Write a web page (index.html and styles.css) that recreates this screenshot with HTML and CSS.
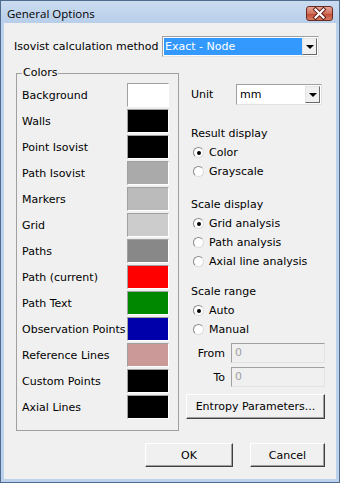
FILE: index.html
```html
<!DOCTYPE html>
<html lang="en">
<head>
    <meta charset="UTF-8">
    <title>General Options</title>
    <link rel="stylesheet" href="styles.css">
</head>
<body>
    <div class="window">
        <div class="titlebar">
            <span class="title">General Options</span>
            <span class="close">
                <svg width="27" height="15" viewBox="0 0 27 15">
                    <path d="M9.5 3.5 L17.5 11.5 M17.5 3.5 L9.5 11.5" stroke="#5a1a12" stroke-width="4" stroke-linecap="square"/>
                    <path d="M9.5 3.5 L17.5 11.5 M17.5 3.5 L9.5 11.5" stroke="#fff" stroke-width="2.2" stroke-linecap="square"/>
                </svg>
            </span>
        </div>
        <div class="client">
            <div class="method-row">
                <span class="method-label">Isovist calculation method</span>
                <div class="combo combo-method">
                    <span class="combo-value selected">Exact - Node</span>
                    <span class="combo-arrow"><span class="tri"></span></span>
                </div>
            </div>

            <div class="main">
                <fieldset class="colors">
                    <legend>Colors</legend>
                    <div class="color-row"><span>Background</span><span class="swatch sw-white"></span></div>
                    <div class="color-row"><span>Walls</span><span class="swatch sw-black"></span></div>
                    <div class="color-row"><span>Point Isovist</span><span class="swatch sw-black"></span></div>
                    <div class="color-row"><span>Path Isovist</span><span class="swatch sw-gray1"></span></div>
                    <div class="color-row"><span>Markers</span><span class="swatch sw-gray2"></span></div>
                    <div class="color-row"><span>Grid</span><span class="swatch sw-gray3"></span></div>
                    <div class="color-row"><span>Paths</span><span class="swatch sw-gray4"></span></div>
                    <div class="color-row"><span>Path (current)</span><span class="swatch sw-red"></span></div>
                    <div class="color-row"><span>Path Text</span><span class="swatch sw-green"></span></div>
                    <div class="color-row"><span>Observation Points</span><span class="swatch sw-blue"></span></div>
                    <div class="color-row"><span>Reference Lines</span><span class="swatch sw-pink"></span></div>
                    <div class="color-row"><span>Custom Points</span><span class="swatch sw-black"></span></div>
                    <div class="color-row"><span>Axial Lines</span><span class="swatch sw-black"></span></div>
                </fieldset>

                <div class="options">
                    <div class="unit-row">
                        <span class="unit-label">Unit</span>
                        <div class="combo combo-unit">
                            <span class="combo-value">mm</span>
                            <span class="combo-arrow"><span class="tri"></span></span>
                        </div>
                    </div>

                    <div class="group first">
                        <div class="line">Result display</div>
                        <div class="radio checked"><span class="dot"></span>Color</div>
                        <div class="radio"><span class="dot"></span>Grayscale</div>
                    </div>

                    <div class="group gap-14">
                        <div class="line">Scale display</div>
                        <div class="radio checked"><span class="dot"></span>Grid analysis</div>
                        <div class="radio"><span class="dot"></span>Path analysis</div>
                        <div class="radio"><span class="dot"></span>Axial line analysis</div>
                    </div>

                    <div class="group gap-11">
                        <div class="line">Scale range</div>
                        <div class="radio checked"><span class="dot"></span>Auto</div>
                        <div class="radio"><span class="dot"></span>Manual</div>
                    </div>

                    <div class="range-row from">
                        <span class="range-label">From</span>
                        <span class="field disabled">0</span>
                    </div>
                    <div class="range-row to">
                        <span class="range-label">To</span>
                        <span class="field disabled">0</span>
                    </div>

                    <button class="btn entropy">Entropy Parameters...</button>
                </div>
            </div>

            <div class="footer">
                <button class="btn ok">OK</button>
                <button class="btn cancel">Cancel</button>
            </div>
        </div>
    </div>
</body>
</html>
```

FILE: styles.css
```css
html, body {
    margin: 0;
    padding: 0;
}
body {
    width: 340px;
    height: 483px;
    font-family: "DejaVu Sans", Tahoma, sans-serif;
    font-size: 11px;
    color: #000;
}
.window {
    width: 340px;
    height: 483px;
    box-sizing: border-box;
    border: 1px solid #4f6c8e;
    background: #bcd2ec;
    padding: 0 3px 3px;
    display: flex;
    flex-direction: column;
}
.titlebar {
    height: 22px;
    margin: 0 -3px;
    padding: 0 6px;
    background: linear-gradient(to bottom, #cadcf0, #b8cee9);
    display: flex;
    align-items: center;
    justify-content: space-between;
}
.title {
    font-family: "Open Sans", "DejaVu Sans", sans-serif;
    font-size: 11.5px;
    color: #000;
    padding-top: 2px;
}
.close {
    width: 27px;
    height: 15px;
    margin-top: 3px;
    box-sizing: border-box;
    border: 1px solid #6b2a20;
    border-radius: 3px;
    background: linear-gradient(to bottom, #e7a597, #d0705c 50%, #c04a33 51%, #d47b62);
    display: flex;
    overflow: hidden;
}
.close svg {
    margin: -1px;
}
.client {
    flex: 1;
    background: #f0f0f0;
    display: flex;
    flex-direction: column;
}

/* top row */
.method-row {
    display: flex;
    align-items: center;
    margin-top: 13px;
    padding-left: 10px;
}
.method-label {
    width: 148px;
}
.combo {
    box-sizing: border-box;
    height: 21px;
    border: 1px solid;
    border-color: #a0a0a0 #e3e3e3 #e3e3e3 #a0a0a0;
    background: #fff;
    padding: 1px;
    display: flex;
}
.combo-method {
    width: 157px;
}
.combo-value {
    flex: 1;
    line-height: 17px;
    padding-left: 2px;
}
.combo-value.selected {
    background: #3399ff;
    color: #fff;
    padding-left: 1px;
}
.combo-arrow {
    width: 15px;
    box-sizing: border-box;
    background: #f0f0f0;
    border: 1px solid;
    border-color: #e3e3e3 #696969 #696969 #e3e3e3;
    display: flex;
    align-items: center;
    justify-content: center;
}
.tri {
    width: 0;
    height: 0;
    border-left: 4px solid transparent;
    border-right: 4px solid transparent;
    border-top: 4px solid #000;
}

/* main area */
.main {
    display: flex;
    align-items: flex-start;
    margin-top: 9px;
    padding-left: 12px;
    gap: 7px;
}
.colors {
    margin: 0;
    width: 163px;
    box-sizing: border-box;
    border: 1px solid #a0a0a0;
    padding: 3px 9px 11px 5px;
    display: flex;
    flex-direction: column;
    gap: 2px;
    min-inline-size: 0;
}
.colors legend {
    padding: 0 1px;
    line-height: 14px;
}
.color-row {
    display: flex;
    align-items: center;
    justify-content: space-between;
    height: 24px;
}
.swatch {
    width: 42px;
    height: 24px;
    box-sizing: border-box;
    border: 1px solid;
    border-color: #a0a0a0 #fff #fff #a0a0a0;
}
.sw-white { background: #fff; }
.sw-black { background: #000; }
.sw-gray1 { background: #aaaaaa; }
.sw-gray2 { background: #bbbbbb; }
.sw-gray3 { background: #cccccc; }
.sw-gray4 { background: #888888; }
.sw-red { background: #ff0000; }
.sw-green { background: #008800; }
.sw-blue { background: #0000aa; }
.sw-pink { background: #cc9999; }

/* right options */
.options {
    width: 139px;
    margin-top: 18px;
    display: flex;
    flex-direction: column;
}
.unit-row {
    display: flex;
    align-items: center;
}
.unit-label {
    width: 45px;
    padding-left: 5px;
}
.combo-unit {
    width: 86px;
}
.group.first {
    margin-top: 19px;
}
.group.gap-14 {
    margin-top: 14px;
}
.group.gap-11 {
    margin-top: 11px;
}
.line {
    height: 19px;
    line-height: 19px;
    padding-left: 5px;
}
.radio {
    height: 19px;
    display: flex;
    align-items: center;
    padding-left: 7px;
    gap: 5px;
}
.dot {
    width: 11px;
    height: 11px;
    box-sizing: border-box;
    border-radius: 50%;
    border: 1px solid;
    border-color: #8a8a8a #dcdcdc #dcdcdc #8a8a8a;
    background: #fff;
    display: flex;
    align-items: center;
    justify-content: center;
}
.radio.checked .dot::after {
    content: "";
    width: 4px;
    height: 4px;
    border-radius: 50%;
    background: #000;
}
.range-row {
    display: flex;
    align-items: center;
    height: 20px;
    margin-top: 4px;
}
.range-label {
    width: 39px;
    text-align: right;
    padding-right: 6px;
}
.field {
    width: 94px;
    height: 20px;
    box-sizing: border-box;
    border: 1px solid;
    border-color: #a0a0a0 #e3e3e3 #e3e3e3 #a0a0a0;
    padding-left: 3px;
    line-height: 18px;
}
.field.disabled {
    background: #f0f0f0;
    color: #a0a0a0;
}

.btn {
    font-family: "DejaVu Sans", Tahoma, sans-serif;
    font-size: 11px;
    color: #000;
    background: #f0f0f0;
    box-sizing: border-box;
    border: 1px solid;
    border-color: #fff #404040 #404040 #fff;
    box-shadow: inset -1px -1px 0 #a0a0a0;
    padding: 0;
    border-radius: 0;
}
.entropy {
    width: 139px;
    height: 25px;
    margin-top: 7px;
}

.footer {
    display: flex;
    justify-content: flex-end;
    gap: 17px;
    margin-top: 12px;
    padding-right: 11px;
}
.ok {
    width: 88px;
    height: 24px;
}
.cancel {
    width: 75px;
    height: 24px;
}
```
